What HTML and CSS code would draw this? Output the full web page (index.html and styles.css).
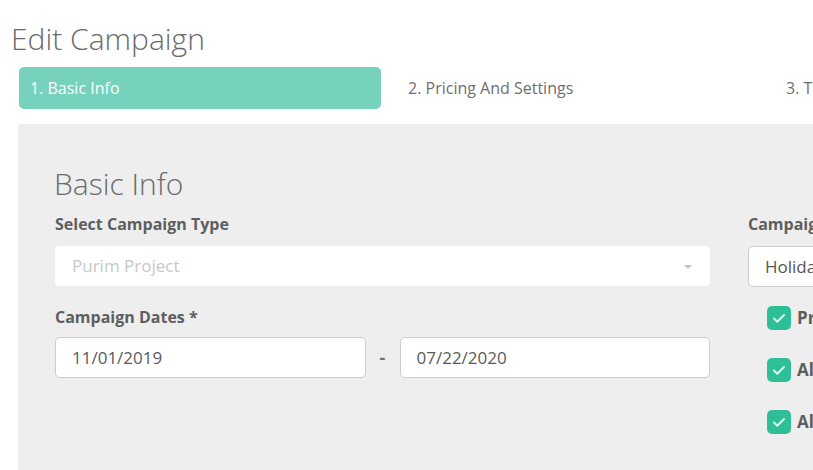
FILE: index.html
```html
<!DOCTYPE html>
<html lang="en">
<head>
<meta charset="utf-8">
<title>Edit Campaign</title>
<link rel="stylesheet" href="styles.css">
</head>
<body>
<div class="page">
  <h1 class="page-title">Edit Campaign</h1>
  <nav class="steps">
    <div class="step active">1. Basic Info</div>
    <div class="step">2. Pricing And Settings</div>
    <div class="step">3. Thank You Page</div>
  </nav>
  <section class="panel">
    <h2 class="panel-title">Basic Info</h2>
    <div class="cols">
      <div class="col-left">
        <div class="field">
          <label class="label">Select Campaign Type</label>
          <div class="select">
            <span class="placeholder">Purim Project</span>
            <span class="caret"></span>
          </div>
        </div>
        <div class="field">
          <label class="label">Campaign Dates *</label>
          <div class="dates">
            <div class="input">11/01/2019</div>
            <span class="dash">-</span>
            <div class="input">07/22/2020</div>
          </div>
        </div>
      </div>
      <div class="col-right">
        <label class="label">Campaign Category</label>
        <div class="select bordered"><span class="value">Holiday</span></div>
        <ul class="checks">
          <li class="check"><span class="box"><svg viewBox="0 0 24 24" width="24" height="24"><path d="M7 12.5l3.3 3.3L17 9" fill="none" stroke="#fff" stroke-width="2" stroke-linecap="round" stroke-linejoin="round" opacity="0.85"/></svg></span><span class="check-label">Private Campaign</span></li>
          <li class="check"><span class="box"><svg viewBox="0 0 24 24" width="24" height="24"><path d="M7 12.5l3.3 3.3L17 9" fill="none" stroke="#fff" stroke-width="2" stroke-linecap="round" stroke-linejoin="round" opacity="0.85"/></svg></span><span class="check-label">Allow Donations</span></li>
          <li class="check"><span class="box"><svg viewBox="0 0 24 24" width="24" height="24"><path d="M7 12.5l3.3 3.3L17 9" fill="none" stroke="#fff" stroke-width="2" stroke-linecap="round" stroke-linejoin="round" opacity="0.85"/></svg></span><span class="check-label">Allow Comments</span></li>
        </ul>
      </div>
    </div>
  </section>
</div>
</body>
</html>
```

FILE: styles.css
```css
html, body {
  margin: 0;
  padding: 0;
  background: #ffffff;
  overflow: hidden;
  height: 470px;
}

body {
  font-family: "Open Sans", "Liberation Sans", sans-serif;
  color: #666;
}

.page {
  width: 1300px;
}

.page-title {
  margin: 21px 0 0 11px;
  font-size: 30px;
  line-height: 36px;
  font-weight: 300;
  color: #6b6b6b;
}

.steps {
  display: flex;
  gap: 16px;
  margin: 10px 0 0 19px;
}

.step {
  width: 362px;
  height: 42px;
  box-sizing: border-box;
  padding-left: 11px;
  display: flex;
  align-items: center;
  font-size: 16px;
  color: #707070;
  border-radius: 5px;
}

.step.active {
  background: #76d1bd;
  color: #ffffff;
}

.panel {
  margin: 15px 0 0 18px;
  background: #eeeeee;
  border-radius: 4px 0 0 0;
  padding: 42.4px 0 0 37px;
  height: 400px;
}

.panel-title {
  margin: 0 0 11.9px -1px;
  font-size: 30px;
  line-height: 36px;
  font-weight: 300;
  color: #6b6b6b;
}

.cols {
  display: flex;
  gap: 38px;
}

.col-left {
  width: 655px;
}

.col-right {
  width: 320px;
}

.field {
  display: flex;
  flex-direction: column;
}

.field + .field {
  margin-top: 21.3px;
}

.label {
  display: block;
  font-size: 16px;
  line-height: 21px;
  font-weight: 700;
  color: #5e5e5e;
  margin-bottom: 10.7px;
}

.field + .field .label {
  margin-bottom: 8.7px;
}

.select {
  position: relative;
  height: 40px;
  box-sizing: border-box;
  background: #ffffff;
  border: 1px solid #ffffff;
  border-radius: 4px;
  display: flex;
  align-items: center;
  padding-left: 16px;
  font-size: 17px;
}

.select.bordered {
  height: 41px;
  border-color: #cccccc;
  border-radius: 5px;
}

.placeholder {
  color: #c8c8c8;
}

.value {
  color: #555;
}

.caret {
  position: absolute;
  right: 17px;
  top: 18px;
  width: 0;
  height: 0;
  border-left: 4px solid transparent;
  border-right: 4px solid transparent;
  border-top: 4px solid #c4c4c4;
}

.dates {
  display: flex;
  align-items: center;
}

.input {
  flex: 1;
  height: 41px;
  box-sizing: border-box;
  background: #ffffff;
  border: 1px solid #cccccc;
  border-radius: 5px;
  display: flex;
  align-items: center;
  padding-left: 16px;
  font-size: 17px;
  color: #5a5a5a;
}

.dash {
  width: 34px;
  text-align: center;
  font-size: 18px;
  font-weight: 700;
  color: #707070;
  line-height: 20px;
}

.checks {
  list-style: none;
  margin: 19px 0 0 19px;
  padding: 0;
  display: flex;
  flex-direction: column;
  gap: 28px;
}

.check {
  display: flex;
  align-items: center;
  gap: 6px;
  height: 24px;
}

.box {
  width: 24px;
  height: 24px;
  background: #2ebf98;
  border-radius: 5px;
  display: flex;
}

.check-label {
  font-size: 17px;
  font-weight: 700;
  color: #5e5e5e;
}
```
